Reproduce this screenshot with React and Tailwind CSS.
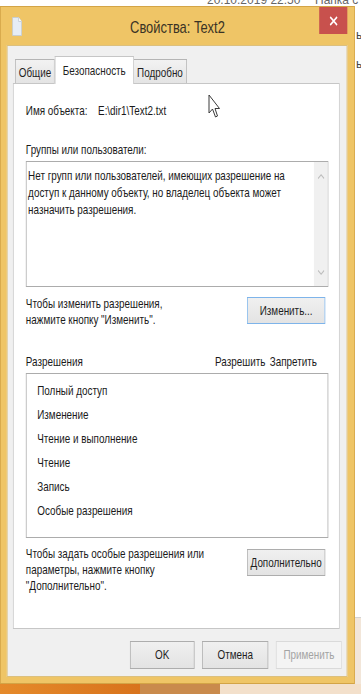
import React from "react";

const font = { fontFamily: '"Liberation Sans", Arial, sans-serif' };

function WinButton({ children, className = "", disabled, primary }) {
  return (
    <div
      className={`flex items-center justify-center text-[13px] border ${
        primary ? "border-[#7eb4ea]" : disabled ? "border-[#dadada]" : "border-[#adadad]"
      } ${disabled ? "bg-[#f4f4f4] text-[#a3a3a3]" : "bg-gradient-to-b from-[#f0f0f0] to-[#e3e3e3] text-[#1e1e1e]"} ${className}`}
    >
      {children}
    </div>
  );
}

function Cursor() {
  return (
    <svg width="13" height="25" viewBox="0 0 13 25" className="absolute left-[208px] top-[94px]">
      <path d="M1 1 L1 19 L4.5 15 L7.5 23 L9.5 22 L7 14.5 L11.5 14.5 Z" fill="#fff" stroke="#3a3a3a" strokeWidth="1" strokeLinejoin="round" />
    </svg>
  );
}

export default function App() {
  const perms = ["Полный доступ", "Изменение", "Чтение и выполнение", "Чтение", "Запись", "Особые разрешения"];

  return (
    <div className="relative w-[361px] h-[694px] overflow-hidden bg-white" style={font}>
      {/* explorer behind the dialog */}
      <div className="absolute left-[207px] top-[-9px] text-[12px] text-[#666] whitespace-nowrap">20.10.2019 22:50</div>
      <div className="absolute left-[315px] top-[-9px] text-[12px] text-[#666] whitespace-nowrap">Папка с ф</div>
      <div className="absolute left-[356px] top-[26px] text-[12px] text-[#444]">ы</div>
      <div className="absolute left-[356px] top-[55px] text-[12px] text-[#444]">ы</div>
      <div className="absolute left-[355px] top-[617px] w-[6px] h-[77px] bg-[#f2e6d9] border-t border-[#d4d4d4]" />
      <div className="absolute left-0 top-[684px] w-[361px] h-[10px] flex">
        <div className="w-[140px] h-full bg-gradient-to-r from-[#e58a2a] to-[#d8731c]" />
        <div className="w-[80px] h-full bg-[#c98a4c]" />
        <div className="flex-1 h-full bg-[#f3e0cb]" />
      </div>

      {/* dialog window, drawn wide and squeezed like the screenshot */}
      <div className="absolute left-0 top-[6px] w-[467px] h-[678px] origin-top-left scale-x-[0.76] bg-[#efc566] border border-[#d3a446] flex flex-col">
        <div className="relative h-[38px] flex justify-center">
          <svg width="13" height="19" viewBox="0 0 13 19" className="absolute left-[15px] top-[10px]">
            <path d="M0.5 0.5 H8.5 L12.5 4.5 V18.5 H0.5 Z" fill="#e6edf5" stroke="#c3ccd6" />
            <path d="M8.5 0.5 V4.5 H12.5" fill="#fbfdff" stroke="#c3ccd6" />
          </svg>
          <div className="text-[17px] text-[#3a3325] pt-[11px] leading-[20px]">Свойства: Text2</div>
          <div className="absolute right-[9px] top-[0px] w-[37px] h-[27px] bg-[#c8514d] flex items-center justify-center">
            <svg width="12" height="10" viewBox="0 0 12 10">
              <path d="M1.5 1 L10.5 9 M10.5 1 L1.5 9" stroke="#fff" strokeWidth="1.8" />
            </svg>
          </div>
        </div>

        <div className="ml-[8px] w-[448px] h-[632px] bg-[#f0f0f0] border border-[#dcc07e] flex flex-col pl-[7px] pt-[10px]">
          {/* tabs */}
          <div className="flex items-end h-[27px] pl-[3px]">
            <div className="w-[52px] h-[24px] border border-b-0 border-[#b5b5b5] bg-gradient-to-b from-[#f2f2f2] to-[#e4e4e4] text-[13px] text-[#1e1e1e] flex justify-center pt-[5px] leading-[15px]">
              Общие
            </div>
            <div className="relative z-10 -mb-px w-[104px] h-[28px] border border-b-0 border-[#c6c6c6] bg-white text-[13px] text-[#1e1e1e] flex justify-center pt-[6px] leading-[15px]">
              Безопасность
            </div>
            <div className="w-[70px] h-[24px] border border-b-0 border-l-0 border-[#b5b5b5] bg-gradient-to-b from-[#f2f2f2] to-[#e4e4e4] text-[13px] text-[#1e1e1e] flex justify-center pt-[5px] leading-[15px]">
              Подробно
            </div>
          </div>

          {/* panel */}
          <div className="w-[430px] h-[546px] bg-white border border-[#c6c6c6] pl-[16px] pr-[14px] flex flex-col text-[13px] text-[#1a1a1a] leading-[16px]">
            <div className="mt-[19px] flex">
              <span className="w-[95px]">Имя объекта:</span>
              <span>E:\dir1\Text2.txt</span>
            </div>

            <div className="mt-[23px]">Группы или пользователи:</div>
            <div className="mt-[3px] h-[126px] border border-[#acacac] flex">
              <div className="flex-1 pl-[2px] pt-[5px] leading-[17px] whitespace-nowrap">
                Нет групп или пользователей, имеющих разрешение на
                <br />
                доступ к данному объекту, но владелец объекта может
                <br />
                назначить разрешения.
              </div>
              <div className="w-[18px] bg-[#f0f0f0] flex flex-col items-center justify-between pt-[12px] pb-[11px]">
                <svg width="9" height="5" viewBox="0 0 9 5"><path d="M0.5 4.5 L4.5 0.8 L8.5 4.5" fill="none" stroke="#bdbdbd" strokeWidth="1.2" /></svg>
                <svg width="9" height="5" viewBox="0 0 9 5"><path d="M0.5 0.5 L4.5 4.2 L8.5 0.5" fill="none" stroke="#bdbdbd" strokeWidth="1.2" /></svg>
              </div>
            </div>

            <div className="mt-[9px] flex justify-between">
              <div className="whitespace-nowrap">
                <div>Чтобы изменить разрешения,</div>
                <div>нажмите кнопку "Изменить".</div>
              </div>
              <WinButton primary className="w-[103px] h-[27px] mt-[1px] mr-[4px]">Изменить...</WinButton>
            </div>

            <div className="mt-[26px] flex whitespace-nowrap">
              <span className="flex-1">Разрешения</span>
              <span className="w-[72px]">Разрешить</span>
              <span className="w-[77px]">Запретить</span>
            </div>
            <div className="mt-[3px] h-[165px] border border-[#acacac] pl-[14px] pt-[5px]">
              {perms.map((p) => (
                <div key={p} className="h-[24px] leading-[24px]">
                  {p}
                </div>
              ))}
            </div>

            <div className="mt-[8px] flex justify-between">
              <div className="whitespace-nowrap">
                <div>Чтобы задать особые разрешения или</div>
                <div>параметры, нажмите кнопку</div>
                <div>"Дополнительно".</div>
              </div>
              <WinButton className="w-[103px] h-[27px] mt-[3px] mr-[4px]">Дополнительно</WinButton>
            </div>
          </div>

          {/* dialog buttons */}
          <div className="mt-[12px] flex justify-end gap-[10px] pr-[6px]">
            <WinButton className="w-[85px] h-[28px]">OK</WinButton>
            <WinButton className="w-[87px] h-[28px]">Отмена</WinButton>
            <WinButton disabled className="w-[87px] h-[28px]">Применить</WinButton>
          </div>
        </div>
      </div>

      <Cursor />
    </div>
  );
}
